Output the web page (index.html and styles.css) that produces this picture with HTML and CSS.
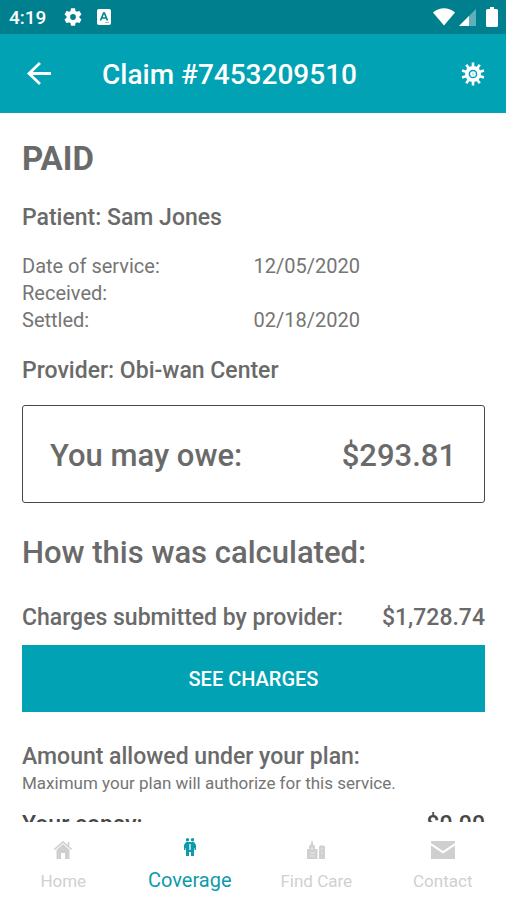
FILE: index.html
```
<!DOCTYPE html>
<html lang="en">
<head>
<meta charset="utf-8">
<meta name="viewport" content="width=device-width, initial-scale=1">
<title>Claim #7453209510</title>
<link rel="stylesheet" href="styles.css">
</head>
<body>
<div class="status">
  <span class="clock">4:19</span>
  <svg class="status-gear" width="18" height="18" viewBox="2 2 20 20" aria-hidden="true"><path fill="#fff" d="M19.14 12.94c.04-.3.06-.61.06-.94s-.02-.64-.07-.94l2.03-1.58a.49.49 0 0 0 .12-.61l-1.92-3.32a.49.49 0 0 0-.59-.22l-2.39.96a7 7 0 0 0-1.62-.94l-.36-2.54a.48.48 0 0 0-.48-.41h-3.84a.48.48 0 0 0-.47.41l-.36 2.54a7.3 7.3 0 0 0-1.62.94l-2.39-.96a.48.48 0 0 0-.59.22L2.74 8.87a.48.48 0 0 0 .12.61l2.03 1.58a7 7 0 0 0 0 1.88l-2.03 1.58a.49.49 0 0 0-.12.61l1.92 3.32c.12.22.37.29.59.22l2.39-.96c.5.38 1.03.7 1.62.94l.36 2.54c.05.24.24.41.48.41h3.84c.24 0 .44-.17.47-.41l.36-2.54a7.3 7.3 0 0 0 1.62-.94l2.39.96c.22.08.47 0 .59-.22l1.92-3.32a.48.48 0 0 0-.12-.61zM12 15.2a3.2 3.2 0 1 1 0-6.4 3.2 3.2 0 0 1 0 6.4z"/></svg>
  <svg width="14" height="16" viewBox="0 0 14 16" aria-hidden="true"><rect width="14" height="16" rx="2" fill="#fff"/><path d="M3.500 11.500 6.600 4h.8l3.100 7.500M4.800 9h4.500" fill="none" stroke="#00808e" stroke-width="1.600"/><path d="M8 13.500h4" stroke="#8cc5cc"/></svg>
  <span class="spacer"></span>
  <svg width="22" height="18" viewBox="0 0 22 18" aria-hidden="true"><path fill="#fff" d="M0 4.500Q11-3.800 22 4.500L11 17.500z"/></svg>
  <svg class="signal" width="17" height="17" viewBox="0 0 17 17" aria-hidden="true"><path fill="#5fb0b8" d="M17 0v17H0z"/><path fill="#fff" d="M10 7v10H0z"/></svg>
  <svg width="12" height="20" viewBox="0 0 12 20" aria-hidden="true"><path fill="#fff" d="M4 0h4v2h2.500Q12 2 12 3.500v15q0 1.500-1.500 1.500h-9Q0 20 0 18.500v-15Q0 2 1.500 2H4z"/></svg>
</div>
<header class="appbar">
  <button class="icon-btn" type="button" aria-label="Back"><svg width="24" height="24" viewBox="0 0 24 24"><path d="M24 11.500H2M13 1 2 11.500 13 22" fill="none" stroke="#fff" stroke-width="2.800"/></svg></button>
  <h1>Claim #7453209510</h1>
  <button class="icon-btn" type="button" aria-label="Settings"><svg width="24" height="24" viewBox="-12 -12 24 24"><g stroke="#fff" stroke-width="2.600"><path d="M0-11.500v23"/><path d="M0-11.500v23" transform="rotate(36)"/><path d="M0-11.500v23" transform="rotate(72)"/><path d="M0-11.500v23" transform="rotate(108)"/><path d="M0-11.500v23" transform="rotate(144)"/></g><circle r="8" fill="#fff"/><circle r="3.600" fill="none" stroke="#00a2b3" stroke-width="1.500"/><path d="M0-1.500v3" stroke="#8dd3da"/></svg></button>
</header>
<main>
  <h2 class="state">PAID</h2>
  <h3 class="patient">Patient: Sam Jones</h3>
  <dl class="dates">
    <dt>Date of service:</dt><dd>12/05/2020</dd>
    <dt>Received:</dt><dd></dd>
    <dt>Settled:</dt><dd>02/18/2020</dd>
  </dl>
  <h3>Provider: Obi-wan Center</h3>
  <section class="owe"><span>You may owe:</span><span>$293.81</span></section>
  <h2 class="calc">How this was calculated:</h2>
  <div class="row"><span>Charges submitted by provider:</span><span>$1,728.74</span></div>
  <button class="charges" type="button">SEE CHARGES</button>
  <h3>Amount allowed under your plan:</h3>
  <p>Maximum your plan will authorize for this service.</p>
  <div class="row copay"><span>Your copay:</span><span>$0.00</span></div>
</main>
<nav>
  <a href="#home"><svg width="18" height="18" viewBox="0 0 18 18" aria-hidden="true"><path fill="#cfcfcf" d="M9 3 2.500 9v9H7v-6h4v6h4.500V9z"/><path fill="none" stroke="#cfcfcf" stroke-width="1.600" d="M.500 8.500 9 1l8.500 7.500M14.500 1v4"/></svg><span>Home</span></a>
  <a class="active" href="#coverage" aria-current="page"><svg width="12" height="18" viewBox="0 0 12 18" aria-hidden="true"><g fill="#0d9bab"><circle cx="3.500" cy="1.800" r="1.700"/><circle cx="8.500" cy="1.800" r="1.700"/><path d="M2 4h8l2 3v5h-1.500v-2H10v8H7v-4H5v4H2v-8h-.500v2H0V7z"/></g><path d="M6 6v6" stroke="#a9dce2" stroke-width="2"/></svg><span>Coverage</span></a>
  <a href="#find-care"><svg width="18" height="18" viewBox="0 0 18 18" aria-hidden="true"><path fill="#d0d0d0" d="M0 8h2V5l3-3 3 3v3h2.500v10H0zM12 6l1-1.500h4l1 1.500v12h-6z"/><path d="M5 0v4" stroke="#d0d0d0" stroke-width="1.500"/><path d="M5 6v3M3.500 7.500h3M3 12h5M3 15h5M14 8h2M14 12h2" stroke="#e6e6e6"/></svg><span>Find Care</span></a>
  <a href="#contact"><svg width="24" height="18" viewBox="0 0 24 18" aria-hidden="true"><path fill="#cfcfcf" d="M0 0h24v2L12 10 0 2zM0 4.500l12 8 12-8V18H0z"/></svg><span>Contact</span></a>
</nav>
</body>
</html>
```
FILE: styles.css
```
* { box-sizing: border-box; }
body {
  margin: 0;
  height: 100vh;
  display: flex;
  flex-direction: column;
  background: #fff;
  color: #6a6a6a;
  font-family: Roboto, "Liberation Sans", sans-serif;
}
h1, h2, h3, p, dl, dd { margin: 0; font-weight: 500; }
svg { display: block; flex: none; }
button { border: 0; padding: 0; font-family: inherit; cursor: pointer; }

.status {
  flex: none;
  height: 34px;
  padding: 0 8px 0 9px;
  display: flex;
  align-items: center;
  background: #00808e;
  color: #fff;
  font-size: 19px;
  font-weight: 500;
}
.status-gear { margin: 0 15px 0 18px; }
.spacer { flex: 1; }
.signal { margin: 0 10px 0 4px; }

.appbar {
  flex: none;
  height: 79px;
  padding: 0 21px 0 27px;
  display: flex;
  align-items: center;
  background: #00a2b3;
  color: #fff;
}
.appbar h1 { flex: 1; margin-left: 51px; padding-top: 2px; font-size: 28px; line-height: 36px; }
.icon-btn { background: none; }

main { flex: 1; min-height: 0; overflow: hidden; padding: 26px 21px 0 22px; }
h2 { font-size: 31px; line-height: 40px; }
h2.state { font-size: 33px; font-weight: 700; }
h3, .row { font-size: 23px; line-height: 30px; font-weight: 500; }
.patient { margin-top: 24px; }
.dates {
  margin: 20px 0 22px;
  display: grid;
  grid-template-columns: 1fr 1fr;
  grid-auto-rows: 27px;
  font-size: 20px;
  line-height: 27px;
  color: #757575;
}
.dates dd, .dates dt { font-weight: 400; }
.owe {
  margin: 19px 0 30px;
  padding: 2px 28px 0 27px;
  height: 98px;
  display: flex;
  align-items: center;
  justify-content: space-between;
  border: 1px solid #484848;
  border-radius: 3px;
  font-size: 31px;
  font-weight: 500;
}
.row { display: flex; justify-content: space-between; }
.calc { margin-bottom: 30px; }
.charges {
  display: block;
  width: 100%;
  height: 67px;
  margin: 12px 0 30px;
  background: #00a2b3;
  color: #fff;
  font-size: 20px;
  font-weight: 500;
}
p { font-size: 17px; line-height: 22px; font-weight: 400; color: #757575; }
.copay { margin-top: 16px; color: #484848; }

nav {
  flex: none;
  height: 78px;
  display: grid;
  grid-template-columns: repeat(4, 1fr);
  background: #fff;
}
nav a {
  display: flex;
  flex-direction: column;
  align-items: center;
  gap: 10px;
  padding-top: 19px;
  color: #d0d0d0;
  font-size: 17px;
  line-height: 24px;
  text-decoration: none;
}
nav .active { padding-top: 16px; color: #0d9bab; font-size: 20px; gap: 12px; }
```
